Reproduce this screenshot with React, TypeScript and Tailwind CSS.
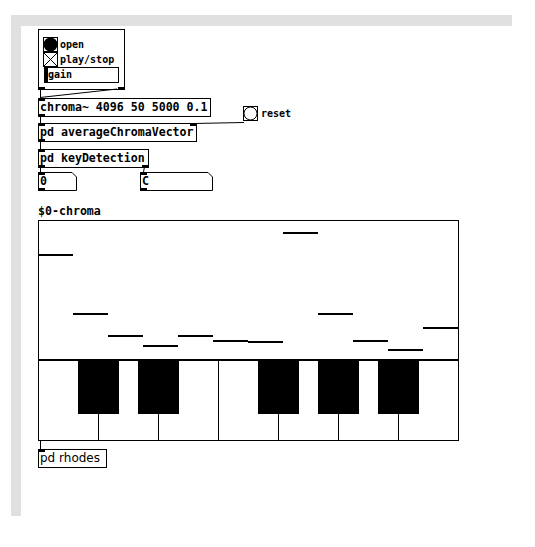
import React from 'react';

// Pd-style canvas: objects are placed at their patch coordinates
const MONO = "font-['DejaVu_Sans_Mono',monospace] font-bold";

const Mark = ({ className }: { className: string }) => (
  <div className={`absolute w-[7px] h-[3px] bg-black ${className}`} />
);

const chroma = [34, 93, 115, 125, 115, 120, 121, 12, 93, 120, 129, 107];

const Bang = ({ filled }: { filled?: boolean }) => (
  <svg width="15" height="15" className="shrink-0">
    <rect x="0.5" y="0.5" width="14" height="14" fill="white" stroke="black" />
    {filled ? (
      <circle cx="7.5" cy="7.5" r="7" fill="black" />
    ) : (
      <circle cx="7.5" cy="7.5" r="6.5" fill="none" stroke="black" />
    )}
  </svg>
);

export default function App() {
  return (
    <div className="w-[535px] h-[547px] bg-white pt-[15px] pl-[11px]">
      <div className="w-[501px] h-[501px] border-t-[11px] border-l-[10px] border-[#e0e0e0] bg-white">
        <div className="relative w-full h-full">
          {/* connections */}
          <svg className="absolute inset-0 pointer-events-none" width="491" height="490">
            <g stroke="black" strokeWidth="1" fill="none">
              <line x1="19.5" y1="64" x2="19.5" y2="72" />
              <line x1="96" y1="63" x2="19" y2="71.5" />
              <line x1="19.5" y1="90" x2="19.5" y2="97" />
              <line x1="223" y1="96.5" x2="172" y2="97.5" />
              <line x1="19.5" y1="115" x2="19.5" y2="123" />
              <line x1="19.5" y1="141" x2="19.5" y2="146" />
              <line x1="123.5" y1="141" x2="122.5" y2="146" />
              <line x1="19.5" y1="414" x2="19.5" y2="423" />
            </g>
          </svg>

          {/* graph-on-parent controls */}
          <div className="absolute left-[17px] top-[3px] w-[87px] h-[61px] border border-black pl-[4px] pt-[7px] flex flex-col">
            <div className="flex items-center gap-[2px]">
              <Bang filled />
              <span className={`text-[10px] leading-[12px] text-black ${MONO}`}>open</span>
            </div>
            <div className="flex items-center gap-[2px]">
              <svg width="15" height="15" className="shrink-0">
                <rect x="0.5" y="0.5" width="14" height="14" fill="white" stroke="black" />
                <line x1="1" y1="1" x2="14" y2="14" stroke="black" />
                <line x1="14" y1="1" x2="1" y2="14" stroke="black" />
              </svg>
              <span className={`text-[10px] leading-[12px] text-black ${MONO}`}>play/stop</span>
            </div>
            <div className="ml-[1px] w-[75px] h-[16px] border border-black flex items-center">
              <div className="w-[3px] h-full bg-black" />
              <span className={`text-[10px] leading-[12px] text-black ${MONO}`}>gain</span>
            </div>
            <Mark className="-left-px -bottom-px" />
            <Mark className="-right-px -bottom-px" />
          </div>

          {/* object boxes */}
          <div className={`absolute left-[17px] top-[72px] w-[173px] h-[19px] border border-black pl-[1px] text-[11.6px] leading-[16px] text-black whitespace-pre ${MONO}`}>
            chroma~ 4096 50 5000 0.1
            <Mark className="-left-px -top-px" />
            <Mark className="-left-px -bottom-px" />
          </div>

          <div className="absolute left-[222px] top-[80px] flex items-center gap-[3px]">
            <Bang />
            <span className={`text-[10px] leading-[12px] text-black ${MONO}`}>reset</span>
          </div>

          <div className={`absolute left-[17px] top-[97px] w-[159px] h-[19px] border border-black pl-[1px] text-[11.6px] leading-[16px] text-black whitespace-pre ${MONO}`}>
            pd averageChromaVector
            <Mark className="-left-px -top-px" />
            <Mark className="-right-px -top-px" />
            <Mark className="-left-px -bottom-px" />
          </div>

          <div className={`absolute left-[17px] top-[123px] w-[111px] h-[19px] border border-black pl-[1px] text-[11.6px] leading-[16px] text-black whitespace-pre ${MONO}`}>
            pd keyDetection
            <Mark className="-left-px -top-px" />
            <Mark className="-left-px -bottom-px" />
            <Mark className="-right-px -bottom-px" />
          </div>

          {/* atom boxes */}
          <div className="absolute left-[17px] top-[146px] w-[39px] h-[19px]">
            <svg className="absolute inset-0" width="39" height="19">
              <polygon points="0.5,0.5 34,0.5 38.5,5 38.5,18.5 0.5,18.5" fill="white" stroke="black" />
            </svg>
            <div className={`relative pl-[2px] pt-[1px] text-[11.6px] leading-[16px] text-black ${MONO}`}>0</div>
            <Mark className="left-0 top-0" />
            <Mark className="left-0 bottom-0" />
          </div>
          <div className="absolute left-[119px] top-[146px] w-[73px] h-[19px]">
            <svg className="absolute inset-0" width="73" height="19">
              <polygon points="0.5,0.5 68,0.5 72.5,5 72.5,18.5 0.5,18.5" fill="white" stroke="black" />
            </svg>
            <div className={`relative pl-[2px] pt-[1px] text-[11.6px] leading-[16px] text-black ${MONO}`}>C</div>
            <Mark className="left-0 top-0" />
            <Mark className="left-0 bottom-0" />
          </div>

          {/* array graph with keyboard */}
          <div className="absolute left-[17px] top-[177px] flex flex-col gap-[1px]">
            <div className={`text-[11.6px] leading-[16px] text-black ${MONO}`}>$0-chroma</div>
            <svg width="421" height="221">
              <rect x="0.5" y="0.5" width="420" height="220" fill="white" stroke="black" />
              {chroma.map((y, i) => (
                <rect key={i} x={i * 35} y={y} width="35" height="2" fill="black" />
              ))}
              <rect x="0" y="139" width="421" height="2" fill="black" />
              {[40, 100, 220, 280, 340].map((x) => (
                <rect key={x} x={x} y="140" width="41" height="54" fill="black" />
              ))}
              {[60, 120, 240, 300, 360].map((x) => (
                <line key={x} x1={x + 0.5} y1="194" x2={x + 0.5} y2="220" stroke="black" />
              ))}
              <line x1="180.5" y1="140" x2="180.5" y2="220" stroke="black" />
            </svg>
          </div>

          <div className="absolute left-[17px] top-[423px] w-[69px] h-[19px] border border-black pl-[1px] text-[12px] leading-[17px] text-black font-['DejaVu_Sans',sans-serif]">
            pd rhodes
            <Mark className="-left-px -top-px" />
          </div>
        </div>
      </div>
    </div>
  );
}
